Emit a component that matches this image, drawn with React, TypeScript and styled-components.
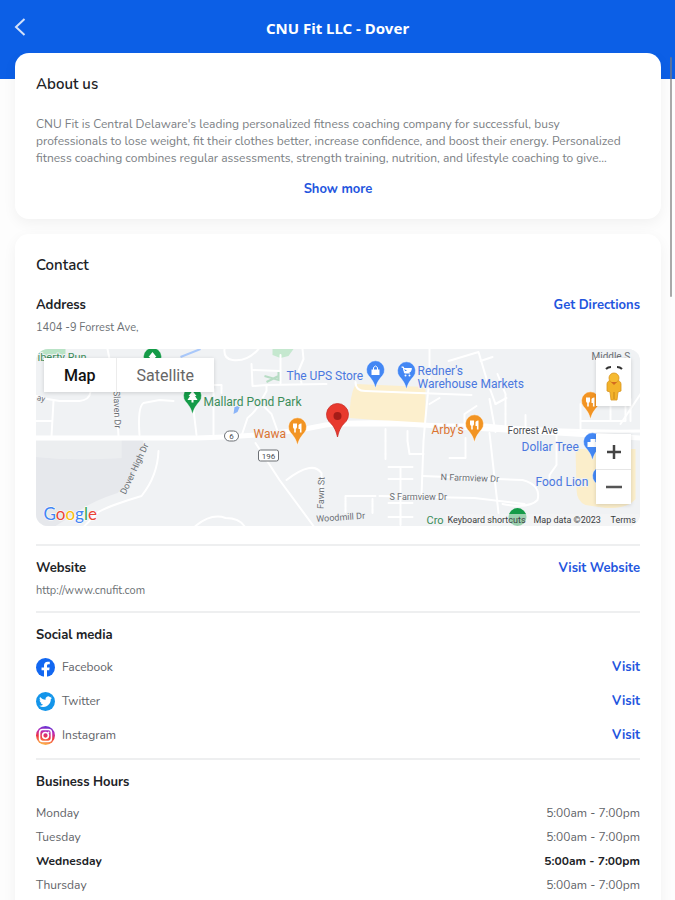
import React, { useState } from "react";
import styled, { createGlobalStyle, css } from "styled-components";

const BLUE = "#0c5fe6";
const LINK = "#2355de";
const FONT = `"Nunito", "Lato", "Open Sans", sans-serif`;

const GlobalStyle = createGlobalStyle`
  * { box-sizing: border-box; }
  body { margin: 0; background: #fdfdfd; font-family: ${FONT}; color: #202226; }
  h1, h2, h3, p, ul { margin: 0; padding: 0; }
  button { font: inherit; border: 0; padding: 0; background: none; cursor: pointer; }
`;

const Screen = styled.div`
  position: relative;
  display: flex;
  flex-direction: column;
  height: 100vh;
  overflow: hidden;
`;

const Header = styled.header`
  flex: none;
  display: grid;
  grid-template-columns: 40px 1fr 40px;
  align-items: center;
  height: 53px;
  background: ${BLUE};
`;

const BackButton = styled.button`
  display: flex;
  justify-content: center;
  color: #d3e1fa;
`;

const Title = styled.h1`
  color: #fff;
  font: 700 15px/20px "Noto Sans", sans-serif;
  text-align: center;
  padding-top: 2px;
`;

const Content = styled.main`
  flex: 1;
  min-height: 0;
  overflow-y: auto;
  scrollbar-width: none;
  display: flex;
  flex-direction: column;
  gap: 15px;
  padding: 0 14px 0 15px;
  background: linear-gradient(${BLUE} 26px, #fdfdfd 26px);
`;

const ScrollThumb = styled.div`
  position: absolute;
  top: 57px;
  right: 3px;
  width: 2px;
  height: 240px;
  border-radius: 1px;
  background: rgba(125, 125, 125, 0.65);
`;

const Card = styled.section`
  flex: none;
  padding: 20px 21px;
  border-radius: 14px;
  background: #fff;
  box-shadow: 0 4px 14px rgba(0, 0, 0, 0.05);
`;

const CardTitle = styled.h2`
  font-size: 15px;
  font-weight: 600;
  line-height: 22px;
`;

const AboutText = styled.p`
  margin-top: 21px;
  padding-right: 12px;
  color: #7b8084;
  font-size: 12px;
  line-height: 17px;
`;

const Centered = styled.div`
  display: flex;
  justify-content: center;
  margin-top: 12px;
`;

const linkText = css`
  color: ${LINK};
  font-size: 13px;
  font-weight: 700;
  line-height: 20px;
  text-decoration: none;
`;

const TextButton = styled.button`
  && { ${linkText} }
`;

const TextLink = styled.a`
  ${linkText}
`;

const Sections = styled.div`
  padding-top: 7px;
`;

const Block = styled.section<{ $divided?: boolean }>`
  padding: 12px 0;
  border-bottom: ${(p) => (p.$divided ? "2px solid #eeeff0" : "0")};
`;

const Row = styled.div`
  display: flex;
  align-items: center;
  justify-content: space-between;
`;

const BlockTitle = styled.h3`
  font-size: 13px;
  font-weight: 700;
  line-height: 20px;
`;

const Detail = styled.p`
  margin-top: 5px;
  color: #6b7074;
  font-size: 11px;
  line-height: 16px;
`;

const SocialList = styled.ul`
  list-style: none;
  display: grid;
  gap: 14px;
  margin-top: 12px;
  padding-bottom: 1px;
`;

const SocialRow = styled.li`
  display: flex;
  align-items: center;
  gap: 7px;
  height: 20px;
  color: #5f6368;
  font-size: 12px;
  ${TextLink} { margin-left: auto; }
`;

const HoursTable = styled.table`
  width: 100%;
  margin-top: 9px;
  border-collapse: collapse;
`;

const HoursRow = styled.tr<{ $today: boolean }>`
  height: 24px;
  color: ${(p) => (p.$today ? "#202226" : "#5f6368")};
  font-size: 12px;
  line-height: 20px;
  th, td { padding: 0; font-weight: ${(p) => (p.$today ? 700 : 400)}; }
  th { text-align: left; }
  td { text-align: right; }
`;

const MapFrame = styled.div`
  position: relative;
  height: 177px;
  margin-top: 13px;
  margin-bottom: 6px;
  border-radius: 12px;
  overflow: hidden;
  background: #f0f2f4;
  font-family: Roboto, sans-serif;
`;

const MapDrawing = styled.svg`
  display: block;
  width: 100%;
  height: 100%;
`;

const MapTypes = styled.div`
  position: absolute;
  top: 9px;
  left: 8px;
  display: flex;
  background: #fff;
  box-shadow: 0 1px 4px rgba(0, 0, 0, 0.15);
`;

const MapTypeButton = styled.button<{ $active: boolean }>`
  && {
    height: 34px;
    padding: 0 20px;
    font-size: 16px;
    font-weight: ${(p) => (p.$active ? 500 : 400)};
    color: ${(p) => (p.$active ? "#111" : "#666")};
  }
  & + & { border-left: 1px solid #ececec; }
`;

const MapControls = styled.div`
  position: absolute;
  top: 9px;
  right: 9px;
  display: flex;
  flex-direction: column;
  gap: 28px;
`;

const ControlGroup = styled.div`
  display: flex;
  flex-direction: column;
  width: 35px;
  background: #fff;
  box-shadow: 0 1px 4px rgba(0, 0, 0, 0.15);
`;

const ControlButton = styled.button<{ $tall?: boolean }>`
  display: flex;
  align-items: center;
  justify-content: center;
  && { height: ${(p) => (p.$tall ? 48 : 35)}px; }
  & + & { border-top: 1px solid #e6e6e6; }
`;

type PinProps = { x: number; y: number; color: string; children?: React.ReactNode };

const Pin = ({ x, y, color, children }: PinProps) => (
  <g transform={`translate(${x} ${y})`}>
    <path
      d="M0 17C-1.500 11-4 8-7 4.500A9 9 0 1 1 7 4.500C4 8 1.500 11 0 17Z"
      fill={color}
      stroke="#fff"
      strokeWidth=".4"
    />
    {children}
  </g>
);

const Cutlery = () => (
  <>
    <path d="M-4.500-4.500H-.500V-1Q-.500 .500-1.700 .700V4.500h-1.600V.700Q-4.500 .500-4.500-1Z" fill="#fff" />
    <path d="M1-3Q2-4.800 4-4.500V4.500H2.400V1H1Z" fill="#fff" />
  </>
);

const Tree = () => <path d="M0-6l4 5H2.500L5 3H1v2.500h-2V3h-4l2.500-4H-4Z" fill="#fff" />;

const RoadMap = () => (
  <MapDrawing viewBox="0 0 605 177" preserveAspectRatio="xMidYMid slice" role="img" aria-label="Map of Forrest Ave">
    <rect width="605" height="177" fill="#f0f2f4" />
    <path d="M0 91h86v18q-40 3-86-1Z" fill="#eceef0" />
    <path d="M0 108q40 4 86 1V91h22q-2 34-26 53-28 9-41 20L20 177H0Z" fill="#e6e8ec" />
    <path d="M4 0h26v6l-6 4H2Z" fill="#b9e3c6" />
    <path d="M237 0h21l-5 7-8 2-8-3Z" fill="#c5e8cf" />
    <path d="M320 35l70 3v37l-76-6q0-22 6-34Z" fill="#fcefcd" />
    <path d="M540 100h60v50q-8 10-30 9l-20-3q-9-4-9-16Z" fill="#fbeecb" />
    <path d="M145 8l20-8" stroke="#a9c8fa" strokeWidth="2" />
    <path d="M199 58l6-2-3 7-4 2Z" fill="#8ab4f8" />
    <g fill="none" stroke="#fff" strokeLinecap="round" strokeLinejoin="round">
      <path d="M0 89h140q90 0 150-13 40-4 80-1l235 14" strokeWidth="5" />
      <path d="M290 76h160q70 7 155 6" strokeWidth="3" />
      <g strokeWidth="2">
        <path d="M0 47l12 3 12 2h20q10-1 11-9M0 72h16M16 87l2-35M83 87L80 40 72 0" />
        <path d="M104 86q-2-28 4-32l16-3 14 1M157 52l4 34M178 40v46M178 36h8v8" />
        <path d="M189 0q-1 10 8 11 15 2 26-11M216 15l1 22 14-1v6l-5 9q-4 10-14 18l-6 18" />
        <path d="M217 21l28 1M231 36l60-1M245 6v28M267 0l1 10-5 12 3 12M226 55l10 10 6 17" />
        <path d="M106 147q-33 10-43 16l-14 14M106 147q16-20 17-45" />
        <path d="M220 94l24 37 34 46M251 131q26-20 35-7v30M160 177q16-13 30-8 15 0 20 10" />
        <path d="M394 0v32q-2 13-6 60l-2 55M320 33q0 9 10 9l106 4M350 80v30M372 82v10l2 13h14" />
        <path d="M387 127l100 4q19 5 15 20-8 9-35 4M344 147l95 2 50 6M310 147h30M310 147v16M337 150v14" />
        <path d="M413 12l30-9 9 30 8 22M445 12l12-4M429 80V65l12-8M429 80v-7M394 55l10-6M430 89v20h-16M470 79V45l-8-20" />
        <path d="M454 84l9 80M454 50l6 33M460 55l11-6M490 66v14M521 85v31l-7 10v9M545 82V55M545 72h45v-25M575 35v37" />
        <path d="M353 118h24M353 130h24M353 154h24M365 118v58M353 168h24M585 75l20-30M595 50v22" />
      </g>
    </g>
    <path d="M229 27l14 4V23M231 33l12-6" stroke="#b7dcc4" strokeWidth="2" fill="none" />
    <g fontSize="9" fill="#6c7075">
      <text transform="translate(90 146) rotate(-65)">Dover High Dr</text>
      <text transform="translate(78 42) rotate(88)">Slaven Dr</text>
      <text transform="translate(288 160) rotate(-88)">Fawn St</text>
      <text transform="translate(281 173) rotate(-4)">Woodmill Dr</text>
      <text transform="translate(1 51) rotate(14)" fontSize="8">ay</text>
      <text x="405" y="131" transform="rotate(2 405 131)">N Farmview Dr</text>
      <text x="354" y="151">S Farmview Dr</text>
      <text x="472" y="85" fontSize="10" fill="#4a4d51">Forrest Ave</text>
      <text x="556" y="11" fontSize="10">Middle S</text>
    </g>
    <g fill="#fff" stroke="#6c7075" strokeWidth="1">
      <rect x="189" y="82" width="14" height="10" rx="5" />
      <rect x="223" y="101" width="20" height="11" rx="2" />
    </g>
    <g fontSize="8" fill="#4a4d51" textAnchor="middle">
      <text x="196" y="90">6</text>
      <text x="233" y="110">196</text>
    </g>
    <Pin x={117} y={9} color="#149b48"><Tree /></Pin>
    <Pin x={157} y={48} color="#149b48"><Tree /></Pin>
    <Pin x={262} y={79} color="#f29423"><Cutlery /></Pin>
    <Pin x={439} y={76} color="#f29423"><Cutlery /></Pin>
    <Pin x={555} y={53} color="#f29423"><Cutlery /></Pin>
    <Pin x={340} y={22} color="#4387f4">
      <path d="M-4-1.500h8V4h-8Z" fill="#fff" />
      <path d="M-2-1v-2.500q2-3 4 0V-1" fill="none" stroke="#fff" />
    </Pin>
    <Pin x={371} y={23} color="#4387f4">
      <path d="M-5-5h2l1 6h5.500M-3-3.500H5L4-.500h-6Z" fill="#fff" stroke="#fff" />
      <circle cx="-1" cy="3.500" r="1" fill="#fff" />
      <circle cx="3" cy="3.500" r="1" fill="#fff" />
    </Pin>
    <Pin x={557} y={94} color="#4387f4"><path d="M-5-1h9v5h-9ZM-2-4h5v3h-5Z" fill="#fff" /></Pin>
    <Pin x={566} y={128} color="#4387f4" />
    <circle cx="482" cy="168" r="9" fill="#149b48" />
    <g transform="translate(302 67)">
      <path d="M0 21C-2 12-5 9-8.500 5.500A11 11 0 1 1 8.500 5.500C5 9 2 12 0 21Z" fill="#e8392e" stroke="#c92f27" strokeWidth=".8" />
      <circle r="4" fill="#a51c18" />
    </g>
    <g fontSize="12" stroke="#f0f2f4" strokeWidth="2" paintOrder="stroke" strokeLinejoin="round">
      <text x="2" y="12" fill="#3c8d5a" fontSize="11">iberty Run</text>
      <text x="168" y="57" fill="#3c8d5a">Mallard Pond Park</text>
      <text x="218" y="89" fill="#dc7431">Wawa</text>
      <text x="396" y="85" fill="#dc7431">Arby's</text>
      <g fill="#4b78df">
        <text x="251" y="31">The UPS Store</text>
        <text x="382" y="26">Redner's</text>
        <text x="382" y="39">Warehouse Markets</text>
        <text x="486" y="102">Dollar Tree</text>
        <text x="500" y="137">Food Lion</text>
      </g>
      <text x="391" y="175" fill="#3c8d5a" fontSize="11">Cro</text>
    </g>
    <rect x="410" y="165" width="195" height="12" fill="#f5f5f5" opacity=".6" />
    <g fontSize="9" fill="#3a3c40">
      <text x="412" y="174">Keyboard shortcuts</text>
      <text x="498" y="174">Map data ©2023</text>
      <text x="575" y="174">Terms</text>
    </g>
    <text x="8" y="171" fontSize="17" fontFamily="Lato, sans-serif" stroke="#fff" strokeWidth="1" paintOrder="stroke">
      <tspan fill="#4285f4">G</tspan><tspan fill="#ea4335">o</tspan><tspan fill="#fbbc05">o</tspan><tspan fill="#4285f4">g</tspan><tspan fill="#34a853">l</tspan><tspan fill="#ea4335">e</tspan>
    </text>
  </MapDrawing>
);

const Pegman = () => (
  <svg width="24" height="40" viewBox="0 0 24 40" aria-hidden="true">
    <path d="M4 7q2-2 5-2M15 5q3 0 5 2" fill="none" stroke="#333" strokeWidth="2" />
    <path d="M5 22q0-4 7-4t7 4v7l-3 1-1 8H9l-1-8-3-1Z" fill="#f3b32a" stroke="#d8941f" strokeWidth=".8" />
    <circle cx="12" cy="16" r="5" fill="#f6bb32" stroke="#d8941f" strokeWidth=".8" />
    <path d="M9 20h6l-3 3Z" fill="#d36b20" />
    <path d="M12 30v7" stroke="#c98518" />
  </svg>
);

const PlusIcon = () => (
  <svg width="16" height="16" viewBox="0 0 16 16" aria-hidden="true">
    <path d="M8 1v14M1 8h14" stroke="#444" strokeWidth="2.500" />
  </svg>
);

const MinusIcon = () => (
  <svg width="16" height="16" viewBox="0 0 16 16" aria-hidden="true">
    <path d="M0 8h16" stroke="#555" strokeWidth="2.500" />
  </svg>
);

const FacebookIcon = () => (
  <svg width="19" height="19" viewBox="0 0 24 24" aria-hidden="true">
    <circle cx="12" cy="12" r="12" fill="#1267f1" />
    <path d="M16.700 15.500l.500-3.500h-3.300V9.700c0-1 .5-1.900 2-1.900h1.500v-3s-1.400-.2-2.700-.2c-2.800 0-4.600 1.700-4.600 4.700V12H7v3.500h3.100V24h3.800v-8.500Z" fill="#fff" />
  </svg>
);

const TwitterIcon = () => (
  <svg width="19" height="19" viewBox="0 0 24 24" aria-hidden="true">
    <circle cx="12" cy="12" r="12" fill="#1395ea" />
    <g transform="translate(4 4) scale(.68)">
      <path d="M24 4.600c-.9.400-1.800.7-2.800.8 1-.6 1.800-1.600 2.200-2.700-1 .6-2 1-3.100 1.200A4.900 4.900 0 0 0 11.900 8.400C7.800 8.200 4.200 6.200 1.700 3.200a4.900 4.900 0 0 0 1.500 6.600c-.8 0-1.600-.2-2.200-.6v.1c0 2.400 1.700 4.400 4 4.800-.7.200-1.500.2-2.300.1a4.900 4.900 0 0 0 4.600 3.400A9.900 9.900 0 0 1 0 19.500 14 14 0 0 0 21.600 7.100c.9-.6 1.700-1.500 2.400-2.500Z" fill="#fff" />
    </g>
  </svg>
);

const InstagramIcon = () => (
  <svg width="19" height="19" viewBox="0 0 24 24" aria-hidden="true">
    <defs>
      <linearGradient id="insta" x1=".6" y1="0" x2=".4" y2="1">
        <stop offset="0" stopColor="#5b33d6" />
        <stop offset=".3" stopColor="#b92bb8" />
        <stop offset=".6" stopColor="#f0353f" />
        <stop offset="1" stopColor="#fdc04e" />
      </linearGradient>
    </defs>
    <circle cx="12" cy="12" r="12" fill="url(#insta)" />
    <g fill="none" stroke="#fff" strokeWidth="2">
      <rect x="4.500" y="4.500" width="15" height="15" rx="4" />
      <circle cx="12" cy="12" r="3.700" />
    </g>
    <circle cx="16" cy="8" r="1" fill="#fff" />
  </svg>
);

const socials = [
  { name: "Facebook", Icon: FacebookIcon },
  { name: "Twitter", Icon: TwitterIcon },
  { name: "Instagram", Icon: InstagramIcon },
];

const hours = ["Monday", "Tuesday", "Wednesday", "Thursday"];

export default function App() {
  const [mapType, setMapType] = useState("Map");

  return (
    <Screen>
      <GlobalStyle />
      <Header>
        <BackButton aria-label="Back">
          <svg width="12" height="20" viewBox="0 0 12 20" aria-hidden="true">
            <path d="M10.500 2L2 10l8.500 8" fill="none" stroke="currentColor" strokeWidth="2" />
          </svg>
        </BackButton>
        <Title>CNU Fit LLC - Dover</Title>
      </Header>
      <Content>
        <Card>
          <CardTitle>About us</CardTitle>
          <AboutText>
            CNU Fit is Central Delaware's leading personalized fitness coaching company for successful, busy
            professionals to lose weight, fit their clothes better, increase confidence, and boost their energy.
            Personalized fitness coaching combines regular assessments, strength training, nutrition, and lifestyle
            coaching to give...
          </AboutText>
          <Centered>
            <TextButton>Show more</TextButton>
          </Centered>
        </Card>
        <Card>
          <CardTitle>Contact</CardTitle>
          <Sections>
            <Block $divided>
              <Row>
                <BlockTitle>Address</BlockTitle>
                <TextLink href="#directions">Get Directions</TextLink>
              </Row>
              <Detail>1404 -9 Forrest Ave,</Detail>
              <MapFrame>
                <RoadMap />
                <MapTypes>
                  {["Map", "Satellite"].map((type) => (
                    <MapTypeButton key={type} $active={type === mapType} onClick={() => setMapType(type)}>
                      {type}
                    </MapTypeButton>
                  ))}
                </MapTypes>
                <MapControls>
                  <ControlGroup>
                    <ControlButton $tall aria-label="Street view"><Pegman /></ControlButton>
                  </ControlGroup>
                  <ControlGroup>
                    <ControlButton aria-label="Zoom in"><PlusIcon /></ControlButton>
                    <ControlButton aria-label="Zoom out"><MinusIcon /></ControlButton>
                  </ControlGroup>
                </MapControls>
              </MapFrame>
            </Block>
            <Block $divided>
              <Row>
                <BlockTitle>Website</BlockTitle>
                <TextLink href="#website">Visit Website</TextLink>
              </Row>
              <Detail>http://www.cnufit.com</Detail>
            </Block>
            <Block $divided>
              <BlockTitle>Social media</BlockTitle>
              <SocialList>
                {socials.map(({ name, Icon }) => (
                  <SocialRow key={name}>
                    <Icon />
                    {name}
                    <TextLink href={`#${name.toLowerCase()}`}>Visit</TextLink>
                  </SocialRow>
                ))}
              </SocialList>
            </Block>
            <Block>
              <BlockTitle>Business Hours</BlockTitle>
              <HoursTable>
                <tbody>
                  {hours.map((day) => (
                    <HoursRow key={day} $today={day === "Wednesday"}>
                      <th scope="row">{day}</th>
                      <td>5:00am - 7:00pm</td>
                    </HoursRow>
                  ))}
                </tbody>
              </HoursTable>
            </Block>
          </Sections>
        </Card>
      </Content>
      <ScrollThumb />
    </Screen>
  );
}
